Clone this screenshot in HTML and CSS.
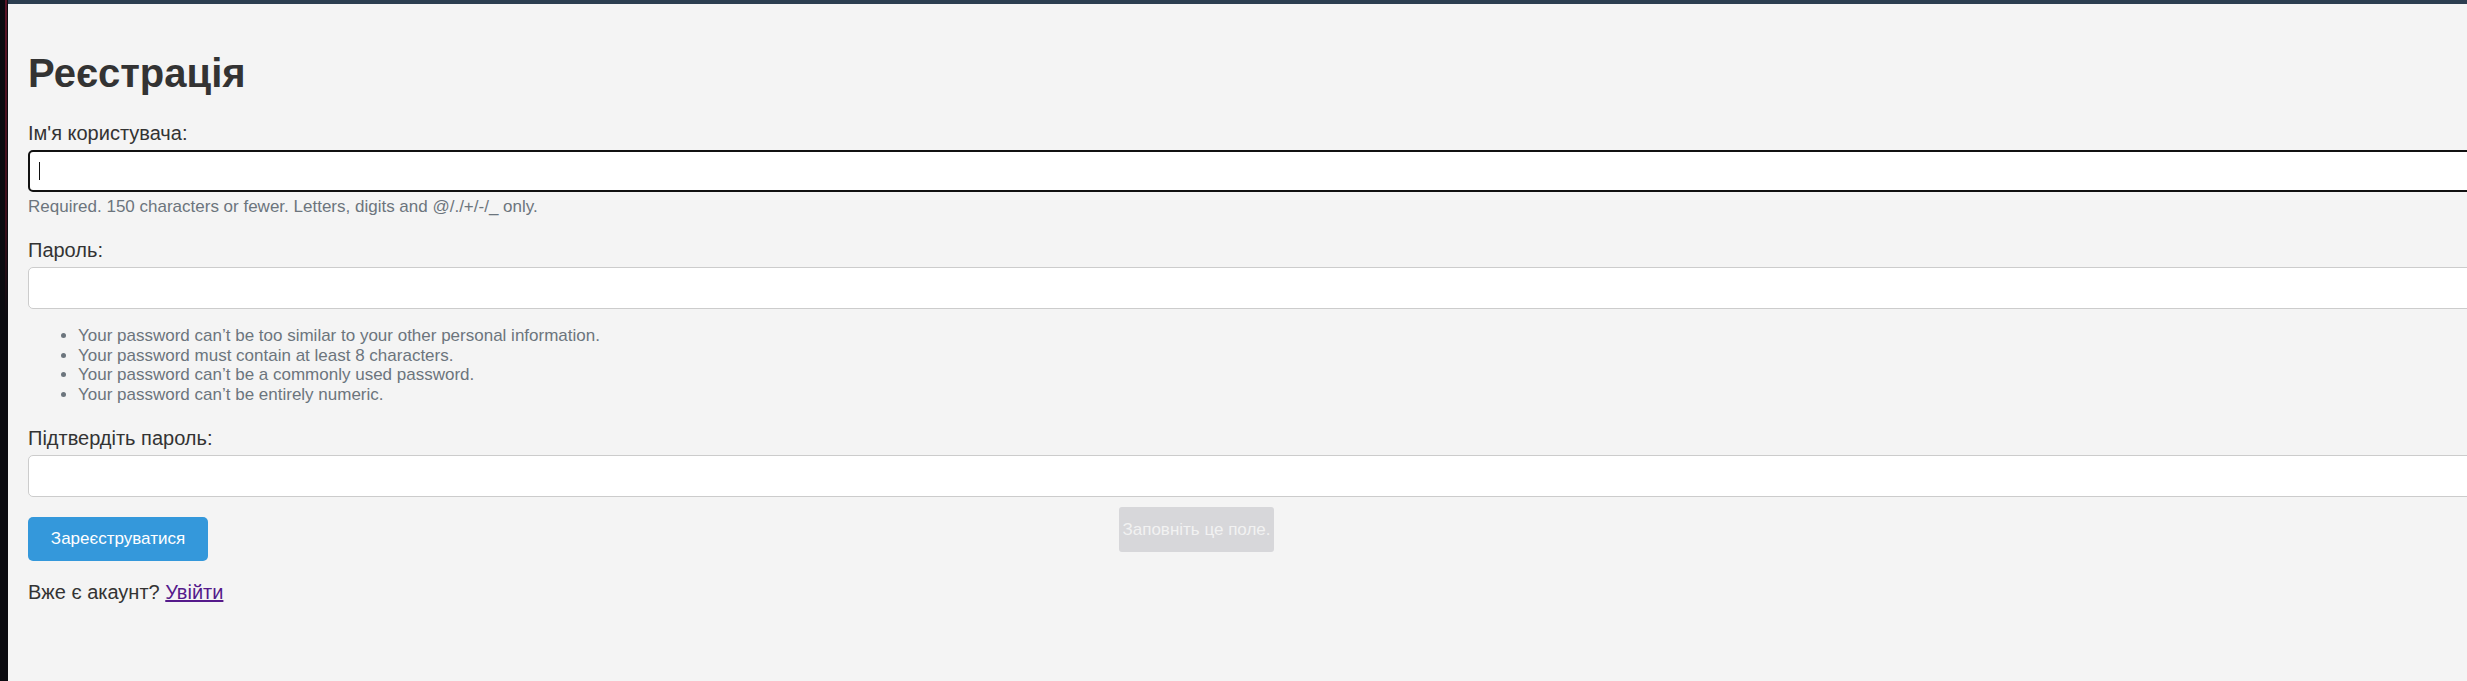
FILE: index.html
```html
<!DOCTYPE html>
<html lang="uk">
<head>
<meta charset="utf-8">
<title>Реєстрація</title>
<link rel="stylesheet" href="styles.css">
</head>
<body>
<div class="edge"><div class="edge-line"></div></div>
<div class="page">
  <div class="topbar"></div>
  <main class="content">
    <h1 class="title">Реєстрація</h1>
    <form class="form">
      <div class="group group-first">
        <label class="label" for="u">Ім'я користувача:</label>
        <div class="field">
          <input class="input input-focus" id="u" type="text">
          <span class="caret"></span>
        </div>
        <div class="help">Required. 150 characters or fewer. Letters, digits and @/./+/-/_ only.</div>
      </div>
      <div class="group group-second">
        <label class="label" for="p1">Пароль:</label>
        <input class="input" id="p1" type="password">
        <ul class="rules">
          <li>Your password can’t be too similar to your other personal information.</li>
          <li>Your password must contain at least 8 characters.</li>
          <li>Your password can’t be a commonly used password.</li>
          <li>Your password can’t be entirely numeric.</li>
        </ul>
      </div>
      <div class="group group-third">
        <label class="label" for="p2">Підтвердіть пароль:</label>
        <input class="input" id="p2" type="password">
      </div>
      <button class="btn" type="button">Зареєструватися</button>
    </form>
    <p class="login">Вже є акаунт? <a class="link" href="#">Увійти</a></p>
  </main>
  <div class="tooltip">Заповніть це поле.</div>
</div>
</body>
</html>
```
FILE: styles.css
```css
html, body {
  margin: 0;
  padding: 0;
  height: 100%;
}
body {
  display: flex;
  background: #f4f4f4;
  font-family: "Liberation Sans", Arial, sans-serif;
  color: #333;
  overflow: hidden;
}
.edge {
  width: 8px;
  flex: 0 0 8px;
  background: #0b0b10;
  position: relative;
}
.edge-line {
  position: absolute;
  left: 5px;
  top: 0;
  width: 2px;
  height: 320px;
  background: linear-gradient(#5a1426, #3a0e1a 70%, #0b0b10);
}
.page {
  flex: 1;
  position: relative;
  min-width: 0;
}
.topbar {
  height: 4px;
  background: #2c3e50;
}
.content {
  padding-left: 20px;
}
.title {
  margin: 45px 0 0;
  font-size: 40px;
  line-height: 48px;
  font-weight: bold;
  color: #333;
}
.form {
  margin: 0;
}
.group-first { margin-top: 24px; }
.group-second { margin-top: 21px; }
.group-third { margin-top: 21px; }
.label {
  display: block;
  font-size: 20px;
  line-height: 24px;
  margin-bottom: 5px;
  color: #333;
}
.field {
  position: relative;
}
.input {
  display: block;
  box-sizing: border-box;
  width: 2500px;
  height: 42px;
  margin: 0;
  padding: 0 10px;
  border: 1px solid #ccc;
  border-radius: 5px;
  background: #fff;
  font: inherit;
  outline: none;
}
.input-focus {
  border: 2px solid #111;
}
.caret {
  position: absolute;
  left: 11px;
  top: 12px;
  width: 1px;
  height: 18px;
  background: #111;
}
.help {
  margin-top: 5px;
  font-size: 17px;
  line-height: 20px;
  color: #6c757d;
}
.rules {
  margin: 17px 0 0;
  padding-left: 50px;
  font-size: 17px;
  line-height: 19.7px;
  color: #6c757d;
}
.btn {
  display: block;
  margin-top: 20px;
  height: 44px;
  width: 180px;
  padding: 0;
  border: none;
  border-radius: 5px;
  background: #3498db;
  color: #fff;
  font-family: "Liberation Sans", Arial, sans-serif;
  font-size: 17px;
}
.login {
  margin: 19px 0 0;
  font-size: 20px;
  line-height: 24px;
  color: #333;
}
.link {
  color: #551a8b;
}
.tooltip {
  position: absolute;
  left: 1111px;
  top: 507px;
  width: 155px;
  height: 45px;
  box-sizing: border-box;
  border-radius: 3px;
  background: #d7d7da;
  color: #f2f2f2;
  font-size: 17px;
  line-height: 45px;
  text-align: center;
}
```
